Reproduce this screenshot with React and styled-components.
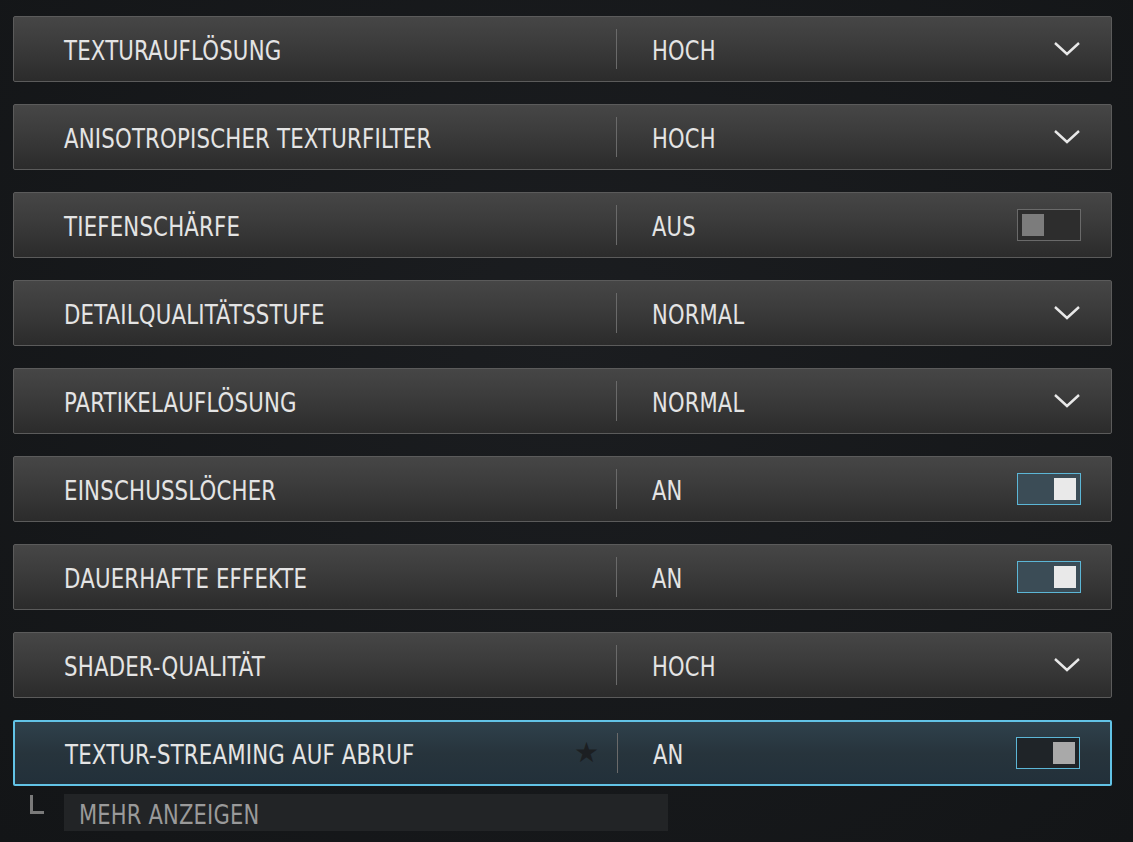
import React from 'react';
import styled, { createGlobalStyle, css } from 'styled-components';

const GlobalStyle = createGlobalStyle`
  html, body {
    margin: 0;
    padding: 0;
    background: #15171a;
  }
  body {
    font-family: 'DejaVu Sans Condensed', 'DejaVu Sans', sans-serif;
  }
`;

const Page = styled.div`
  width: 1133px;
  height: 842px;
  overflow: hidden;
  box-sizing: border-box;
  padding: 16px 21px 0 13px;
  background:
    radial-gradient(ellipse at 50% 40%, #1b1d20 0%, #131517 100%);
`;

const List = styled.div`
  display: flex;
  flex-direction: column;
  gap: 22px;
`;

const Row = styled.div`
  position: relative;
  display: grid;
  grid-template-columns: 602px 1fr;
  align-items: center;
  height: 66px;
  box-sizing: border-box;
  border: 1px solid #5b5b5b;
  border-radius: 2px;
  background: linear-gradient(180deg, #464646 0%, #3b3b3b 45%, #2b2b2b 100%);
  ${({ active }) =>
    active &&
    css`
      border: 2px solid #62c3e6;
      background: linear-gradient(180deg, #2f414c 0%, #27343c 50%, #22303a 100%);
    `}
`;

const Text = styled.span`
  display: inline-block;
  font-size: 26px;
  letter-spacing: 0.2px;
  text-transform: uppercase;
  white-space: nowrap;
  transform: translateY(1.5px) scaleX(${({ squeeze }) => squeeze || 0.9});
  transform-origin: left center;
`;

const Label = styled.div`
  display: flex;
  align-items: center;
  justify-content: space-between;
  padding-left: 50px;
  padding-right: 18px;
  color: #e4e4e4;
`;

const Star = styled.span`
  color: #1c1f22;
  font-family: 'DejaVu Sans', sans-serif;
  font-size: 28px;
  line-height: 1;
`;

const Value = styled.div`
  display: flex;
  align-items: center;
  justify-content: space-between;
  height: 40px;
  border-left: 1px solid #6a6a6a;
  padding-left: 35px;
  padding-right: 30px;
  color: #e4e4e4;
`;

const Toggle = styled.div`
  display: flex;
  align-items: center;
  justify-content: ${({ on }) => (on ? 'flex-end' : 'flex-start')};
  width: 64px;
  height: 32px;
  box-sizing: border-box;
  padding: 0 4px;
  border: 1px solid ${({ on, blue }) => (on || blue ? '#5cb6d6' : '#6a6a6a')};
  background: ${({ on, blue }) =>
    blue ? '#1f2428' : on ? '#3b4c56' : '#2d2d2d'};
`;

const Knob = styled.div`
  width: 22px;
  height: 22px;
  background: ${({ tone }) => tone};
`;

const More = styled.div`
  display: flex;
  align-items: center;
  gap: 20px;
  margin-top: 8px;
  padding-left: 17px;
`;

const Corner = styled.div`
  width: 14px;
  height: 19px;
  align-self: flex-start;
  margin-top: 1px;
  border-left: 3px solid #7a7a7a;
  border-bottom: 3px solid #7a7a7a;
  box-sizing: border-box;
`;

const MoreBox = styled.div`
  width: 604px;
  height: 37px;
  display: flex;
  align-items: center;
  padding-left: 15px;
  box-sizing: border-box;
  background: #222426;
  color: #9a9a9a;
`;

const Chevron = () => (
  <svg width="28" height="16" viewBox="0 0 28 16">
    <path d="M2 2 L14 13 L26 2" fill="none" stroke="#e8e8e8" strokeWidth="2.4" />
  </svg>
);

const rows = [
  { label: 'Texturauflösung', value: 'HOCH', type: 'select' },
  { label: 'Anisotropischer Texturfilter', value: 'HOCH', type: 'select' },
  { label: 'Tiefenschärfe', value: 'AUS', type: 'toggle', on: false },
  { label: 'Detailqualitätsstufe', value: 'NORMAL', type: 'select' },
  { label: 'Partikelauflösung', value: 'NORMAL', type: 'select' },
  { label: 'Einschusslöcher', value: 'AN', type: 'toggle', on: true },
  { label: 'Dauerhafte Effekte', value: 'AN', type: 'toggle', on: true },
  { label: 'Shader-Qualität', value: 'HOCH', type: 'select' },
  { label: 'Textur-Streaming auf Abruf', value: 'AN', type: 'toggle', on: true, active: true },
];

const SettingRow = ({ label, value, type, on, active }) => (
  <Row active={active}>
    <Label>
      <Text squeeze={0.91}>{label}</Text>
      {active && <Star>★</Star>}
    </Label>
    <Value>
      <Text>{value}</Text>
      {type === 'select' ? (
        <Chevron />
      ) : (
        <Toggle on={on} blue={active}>
          <Knob tone={active ? '#a9a9a9' : on ? '#e9e9e9' : '#7c7c7c'} />
        </Toggle>
      )}
    </Value>
  </Row>
);

const App = () => (
  <Page>
    <GlobalStyle />
    <List>
      {rows.map((r) => (
        <SettingRow key={r.label} {...r} />
      ))}
    </List>
    <More>
      <Corner />
      <MoreBox>
        <Text>Mehr anzeigen</Text>
      </MoreBox>
    </More>
  </Page>
);

export default App;
